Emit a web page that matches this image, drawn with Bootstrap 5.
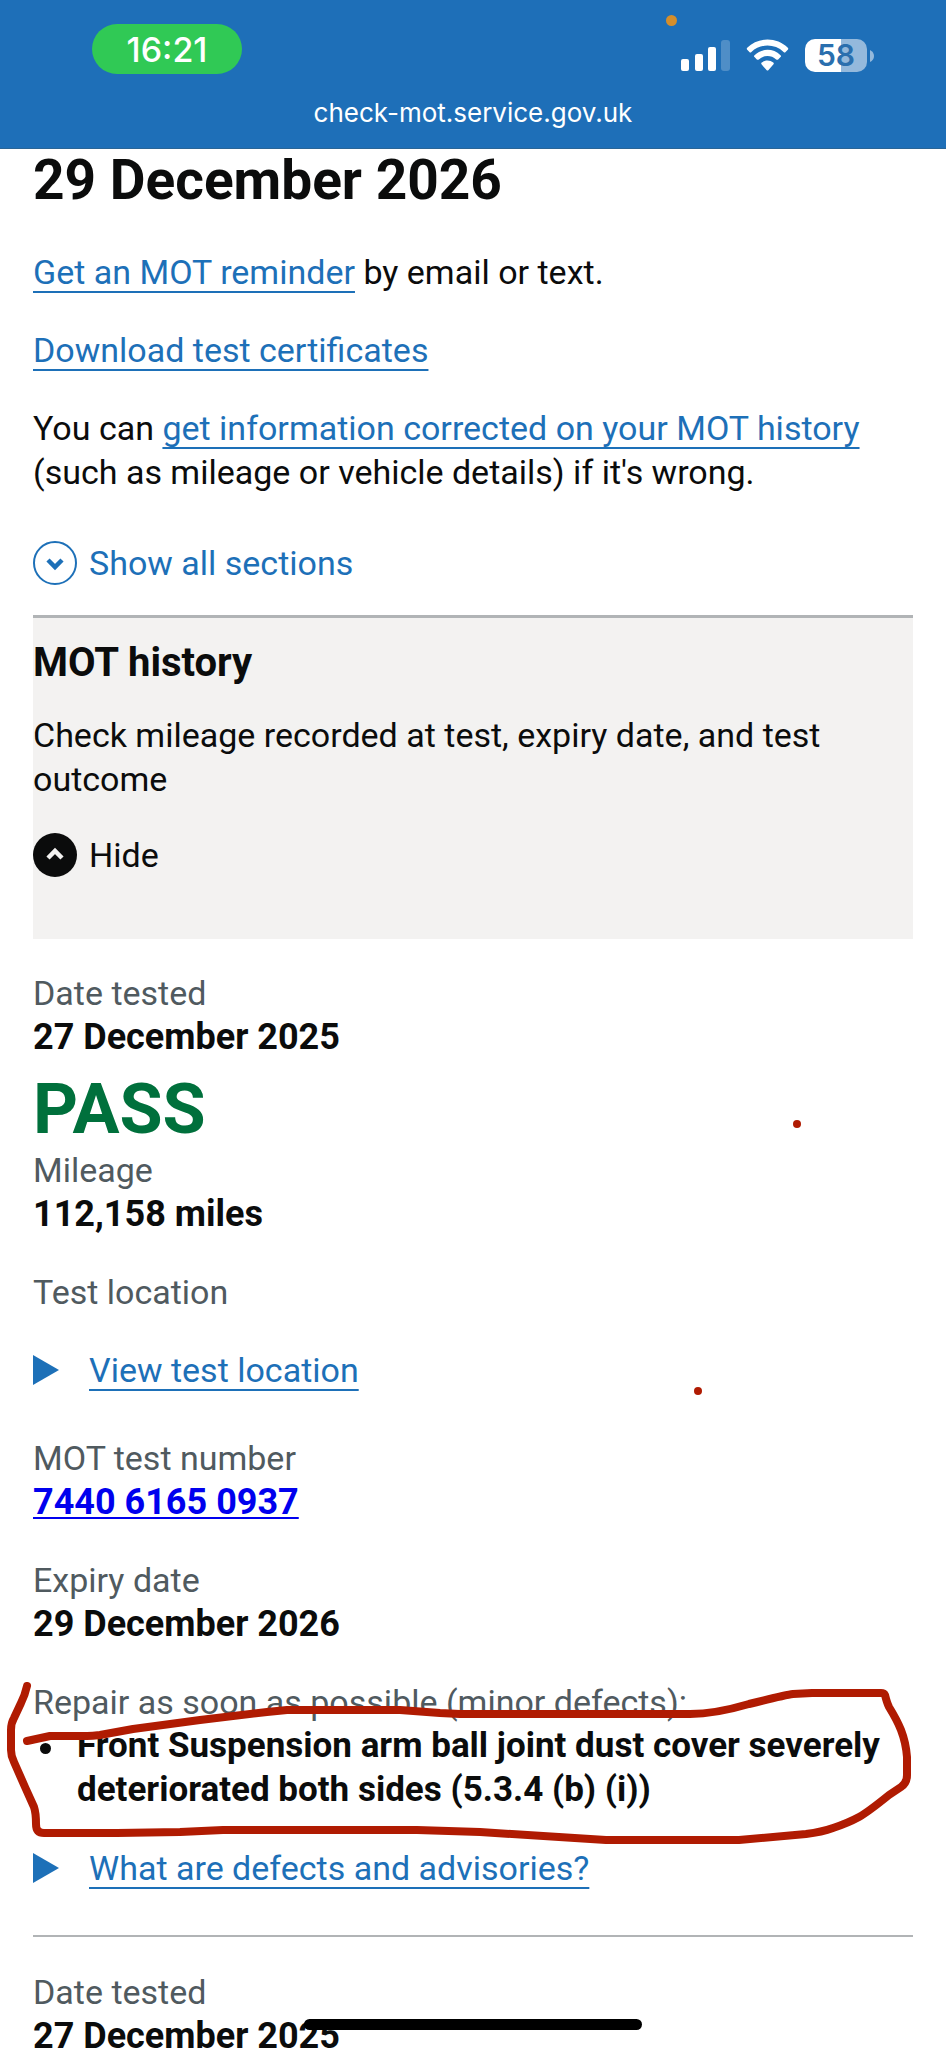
<!DOCTYPE html>
<html lang="en">
<head>
<meta charset="utf-8">
<meta name="viewport" content="width=device-width, initial-scale=1">
<title>Check MOT history</title>
<link href="https://cdn.jsdelivr.net/npm/bootstrap@5.3.0/dist/css/bootstrap.min.css" rel="stylesheet">
<style>
  body { font-family: Roboto, "Liberation Sans", sans-serif; font-size: 34px; line-height: 44px; color: #0b0c0c; }
  a { color: #1d70b8; text-decoration-thickness: 2px; text-underline-offset: 7px; }
  p, dl, dd, ul { margin-bottom: 0; }
  dt, .field-name { font-weight: 400; color: #505a5f; }

  .status-area { height: 149px; background: #1e6fb8; border-bottom: 1px solid #2a6596; font-family: Inter, sans-serif; color: #fff; }
  .status-row { padding: 24px 72px 0 92px; }
  .clock { width: 150px; height: 50px; border-radius: 25px; background: #30c955; font-size: 34px; font-weight: 500; line-height: 52px; }
  .address { font-size: 26px; line-height: 32px; margin-top: 23px; }
  .mic-dot { position: absolute; top: 15px; right: 269px; width: 11px; height: 11px; background: #d58e2b; }
  .phone-icons { margin-top: 15px; }
  .battery { width: 62px; height: 33px; border-radius: 10px; background: linear-gradient(90deg, #fff 58%, #94b9dc 58%); color: #2a6fae; font-size: 30px; font-weight: 600; line-height: 33px; }

  .page { min-height: 0; overflow: auto; scrollbar-width: none; }
  .page::-webkit-scrollbar { display: none; }
  .content { padding: 3px 33px 0; }
  .title { font-size: 55px; line-height: 56px; margin-bottom: 42px; }
  .stack { display: grid; gap: 34px; }
  .toggle { display: flex; align-items: center; gap: 12px; padding: 0; border: 0; background: none; color: inherit; }
  .toggle svg { width: 44px; height: 44px; flex: none; }
  .show-all { color: #1d70b8; margin: 47px 0 30px; }
  .section-head { background: #f3f2f1; border-top: 3px solid #b1b4b6; padding: 20px 0 62px; margin-bottom: 32px; }
  .section-title { font-size: 40px; line-height: 50px; margin-bottom: 25px; }
  .section-head .toggle { margin-top: 32px; }
  .value { font-size: 36px; font-weight: 700; }
  .value a { color: #0000ee; text-underline-offset: 3px; }
  .outcome { font-size: 70px; line-height: 78px; font-weight: 700; color: #00703c; margin-top: 11px; }
  .more summary { display: flex; align-items: center; gap: 30px; color: #1d70b8; list-style: none; }
  .more summary span { text-decoration: underline 2px; text-underline-offset: 7px; }
  .more svg { width: 26px; height: 30px; flex: none; }
  .location { margin-bottom: 10px; }
  .defects { padding-left: 44px; font-size: 35px; list-style: none; }
  .defects li { position: relative; }
  .defects li::before { content: ""; position: absolute; left: -37px; top: 19px; width: 11px; height: 11px; border-radius: 50%; background: currentColor; }
  .divider { margin: 45px 0 33px; border-top: 2px solid #b1b4b6; opacity: 1; }
  .pen { position: absolute; top: 0; left: 0; width: 946px; height: 1899px; pointer-events: none; }
  .home-bar { position: absolute; bottom: 18px; left: 50%; width: 338px; height: 11px; margin-left: -169px; background: #000; }
</style>
</head>
<body>
<div class="vh-100 d-flex flex-column position-relative overflow-hidden">
  <header class="status-area flex-shrink-0 position-relative">
    <span class="mic-dot rounded-circle"></span>
    <div class="status-row d-flex justify-content-between align-items-start">
      <div class="clock text-center">16:21</div>
      <div class="phone-icons d-flex gap-3">
        <svg width="49" height="33" viewBox="0 0 49 33" fill="#fff" aria-hidden="true">
          <rect x="0" y="20" width="8" height="12" rx="2"/><rect x="14" y="15" width="8" height="17" rx="2"/>
          <rect x="27" y="8" width="8" height="24" rx="2"/><rect x="40" y="1" width="9" height="31" rx="3" opacity=".22"/>
        </svg>
        <svg width="43" height="33" viewBox="0 0 43 33" fill="#fff" aria-hidden="true">
          <path d="M1.2 8.8C12-2.2 31-2.2 41.8 8.8q.9 1 0 1.9l-2.2 2.2q-1 1-2 0C28.700 4.400 14.300 4.400 5.400 12.900q-1 1-2 0L1.200 10.700q-.9-.9 0-1.900Z"/>
          <path d="M8.500 16.200C15.800 9 27.200 9 34.500 16.200q1 1 0 1.900l-2.300 2.300q-1 .9-2 0C25.200 15.800 17.800 15.800 12.800 20.400q-1 .9-2 0L8.500 18.100q-1-.9 0-1.900Z"/>
          <path d="M15.700 23.600C19 20.700 24 20.700 27.300 23.600q1 1 0 2L22.500 30.900q-1 1-2 0L15.700 25.600q-1-1 0-2Z"/>
        </svg>
        <div class="d-flex align-items-center">
          <div class="battery text-center">58</div>
          <svg width="7" height="12" viewBox="0 0 7 12" aria-hidden="true"><path d="M3 0q4 2 4 6t-4 6z" fill="#94b9dc"/></svg>
        </div>
      </div>
    </div>
    <div class="address text-center">check-mot.service.gov.uk</div>
  </header>

  <main class="page flex-grow-1">
    <div class="content position-relative">
      <h1 class="title fw-bold">29 December 2026</h1>
      <div class="stack">
        <p><a href="#">Get an MOT reminder</a> by email or text.</p>
        <p><a href="#">Download test certificates</a></p>
        <p>You can <a href="#">get information corrected on your MOT history</a> (such as mileage or vehicle details) if it's wrong.</p>
      </div>

      <button type="button" class="toggle show-all">
        <svg viewBox="0 0 44 44" fill="none" stroke="currentColor" aria-hidden="true"><circle cx="22" cy="22" r="21" stroke-width="2"/><path d="M15 19l7 7 7-7" stroke-width="4.500"/></svg>
        <span>Show all sections</span>
      </button>

      <section class="section-head">
        <h2 class="section-title fw-bold">MOT history</h2>
        <p>Check mileage recorded at test, expiry date, and test outcome</p>
        <button type="button" class="toggle">
          <svg viewBox="0 0 44 44" fill="none" aria-hidden="true"><circle cx="22" cy="22" r="22" fill="#0b0c0c"/><path d="M15 25l7-7 7 7" stroke="#f3f2f1" stroke-width="4.500"/></svg>
          <span>Hide</span>
        </button>
      </section>

      <div class="stack">
        <dl>
          <dt>Date tested</dt>
          <dd class="value">27 December 2025</dd>
          <dd class="outcome">PASS</dd>
          <dt>Mileage</dt>
          <dd class="value">112,158 miles</dd>
        </dl>
        <p class="field-name">Test location</p>
        <details class="more location">
          <summary><svg viewBox="0 0 26 30" aria-hidden="true"><path d="M0 0l26 15L0 30z" fill="#1d70b8"/></svg><span>View test location</span></summary>
        </details>
        <dl>
          <dt>MOT test number</dt>
          <dd class="value"><a href="#">7440 6165 0937</a></dd>
        </dl>
        <dl>
          <dt>Expiry date</dt>
          <dd class="value">29 December 2026</dd>
        </dl>
        <dl>
          <dt>Repair as soon as possible (minor defects):</dt>
          <dd class="value">
            <ul class="defects"><li>Front Suspension arm ball joint dust cover severely deteriorated both sides (5.3.4 (b) (i))</li></ul>
          </dd>
        </dl>
        <details class="more">
          <summary><svg viewBox="0 0 26 30" aria-hidden="true"><path d="M0 0l26 15L0 30z" fill="#1d70b8"/></svg><span>What are defects and advisories?</span></summary>
        </details>
      </div>

      <hr class="divider">

      <dl>
        <dt>Date tested</dt>
        <dd class="value">27 December 2025</dd>
      </dl>

      <!-- Red pen markup drawn over the record -->
      <svg class="pen" viewBox="0 149 946 1899" aria-hidden="true">
        <path d="M27 1686Q25 1695 21 1703L14 1718Q11 1723 11 1730V1750Q11 1756 14 1762L25 1787L34 1807Q36 1813 36 1824Q36 1833 44 1833H117L180 1832L223 1830H417L480 1832L606 1840H739L806 1834Q822 1832 833 1828Q848 1823 859 1817Q868 1812 889 1795L901 1787Q907 1783 907 1775V1757Q906 1743 901 1730Q897 1720 889 1707Q887 1703 885 1695Q884 1693 881 1693H812L793 1694Q785 1695 749 1704Q715 1714 690 1714H460L440 1713L400 1710H287L267 1712L200 1720L133 1729L100 1735Q92 1736 87 1736H50L27 1741" fill="none" stroke="#b01b02" stroke-width="8" stroke-linecap="round" stroke-linejoin="round"/>
        <circle cx="797" cy="1124" r="4" fill="#b01b02"/>
        <circle cx="698" cy="1391" r="4" fill="#b01b02"/>
      </svg>
    </div>
  </main>
  <div class="home-bar rounded-pill"></div>
</div>
<script src="https://cdn.jsdelivr.net/npm/bootstrap@5.3.0/dist/js/bootstrap.bundle.min.js"></script>
</body>
</html>
